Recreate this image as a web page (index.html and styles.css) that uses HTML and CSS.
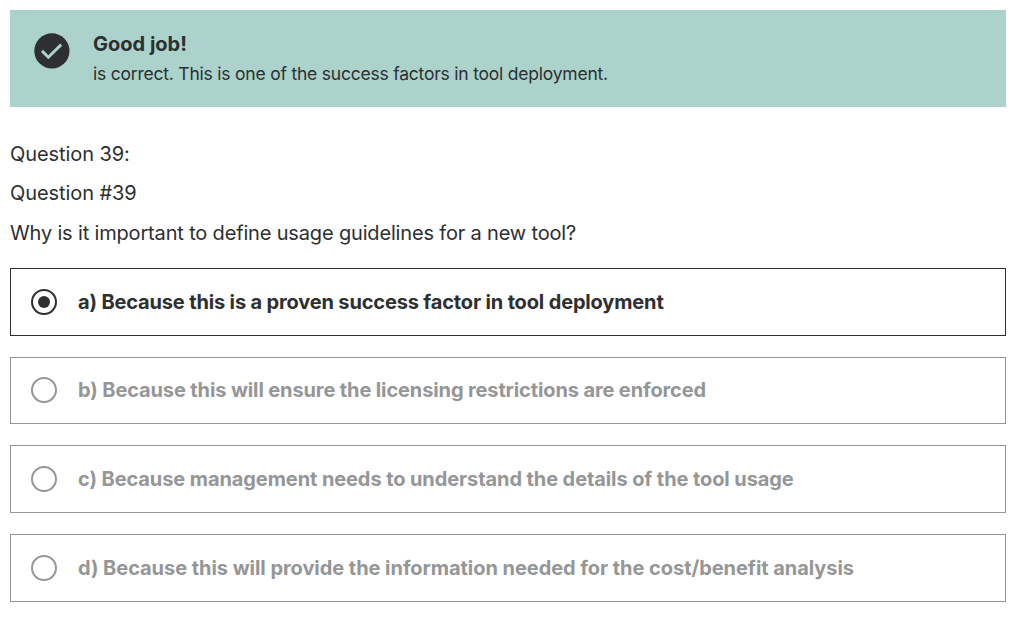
FILE: index.html
```html
<!DOCTYPE html>
<html lang="en">
<head>
<meta charset="utf-8">
<title>Question 39</title>
<link rel="stylesheet" href="styles.css">
</head>
<body>
<main class="quiz">
  <section class="feedback">
    <svg class="feedback-icon" viewBox="0 0 36 36" aria-hidden="true">
      <circle cx="17.9" cy="17.9" r="17.6" fill="#2d2f31"/>
      <path d="M8 17.9 L14.3 24.2 L27.2 11.6" fill="none" stroke="#acd2cc" stroke-width="2.9"/>
    </svg>
    <div class="feedback-copy">
      <h2 class="feedback-title">Good job!</h2>
      <p class="feedback-text">is correct. This is one of the success factors in tool deployment.</p>
    </div>
  </section>
  <div class="prompt">
    <p class="prompt-heading">Question 39:</p>
    <p class="prompt-heading">Question #39</p>
    <p class="prompt-body">Why is it important to define usage guidelines for a new tool?</p>
  </div>
  <div class="answers">
    <div class="answer selected"><i class="radio"></i><span class="label label-a">a) Because this is a proven success factor in tool deployment</span></div>
    <div class="answer answer-b"><i class="radio"></i><span class="label label-b">b) Because this will ensure the licensing restrictions are enforced</span></div>
    <div class="answer"><i class="radio"></i><span class="label label-c">c) Because management needs to understand the details of the tool usage</span></div>
    <div class="answer"><i class="radio"></i><span class="label label-d">d) Because this will provide the information needed for the cost/benefit analysis</span></div>
  </div>
</main>
</body>
</html>
```
FILE: styles.css
```css
* { box-sizing: border-box; }
body { margin: 0; background: #fff; color: #2d2f31; font-family: Inter, "Liberation Sans", sans-serif; }
h2, p { margin: 0; }
.quiz { padding: 10px 20px 0 10px; }
.feedback { display: flex; height: 97px; padding: 23px 24px; background: #acd2cc; }
.feedback-icon { flex: none; width: 36px; height: 36px; margin-right: 23px; }
.feedback-title { font-size: 20px; line-height: 24px; font-weight: 700; letter-spacing: 0; margin-top: -1px; }
.feedback-text { font-size: 17.5px; line-height: 24px; margin-top: 6px; letter-spacing: -0.215px; white-space: nowrap; }
.prompt { padding-top: 33px; font-size: 20px; line-height: 28px; display: grid; row-gap: 11.4px; }
.prompt-heading { letter-spacing: -0.08px; }
.prompt-body { letter-spacing: -0.165px; }
.answers { display: grid; row-gap: 21px; margin-top: 21.2px; }
.answer { display: flex; align-items: center; height: 67.7px; padding-left: 20px; border: 1px solid #959697; color: #959697; }
.answer.selected { border-color: #2d2f31; color: #2d2f31; }
.answer-b { padding-bottom: 1px; }
.radio { flex: none; display: grid; place-items: center; width: 26px; height: 26px; margin-right: 21px; border: 2px solid currentColor; border-radius: 50%; }
.selected .radio::after { content: ""; width: 12px; height: 12px; border-radius: 50%; background: currentColor; }
.label { font-size: 20px; line-height: 28px; font-weight: 700; white-space: nowrap; }
.label-a { letter-spacing: -0.155px; }
.label-b { letter-spacing: -0.12px; }
.label-c { letter-spacing: -0.095px; }
.label-d { letter-spacing: -0.05px; }
```
